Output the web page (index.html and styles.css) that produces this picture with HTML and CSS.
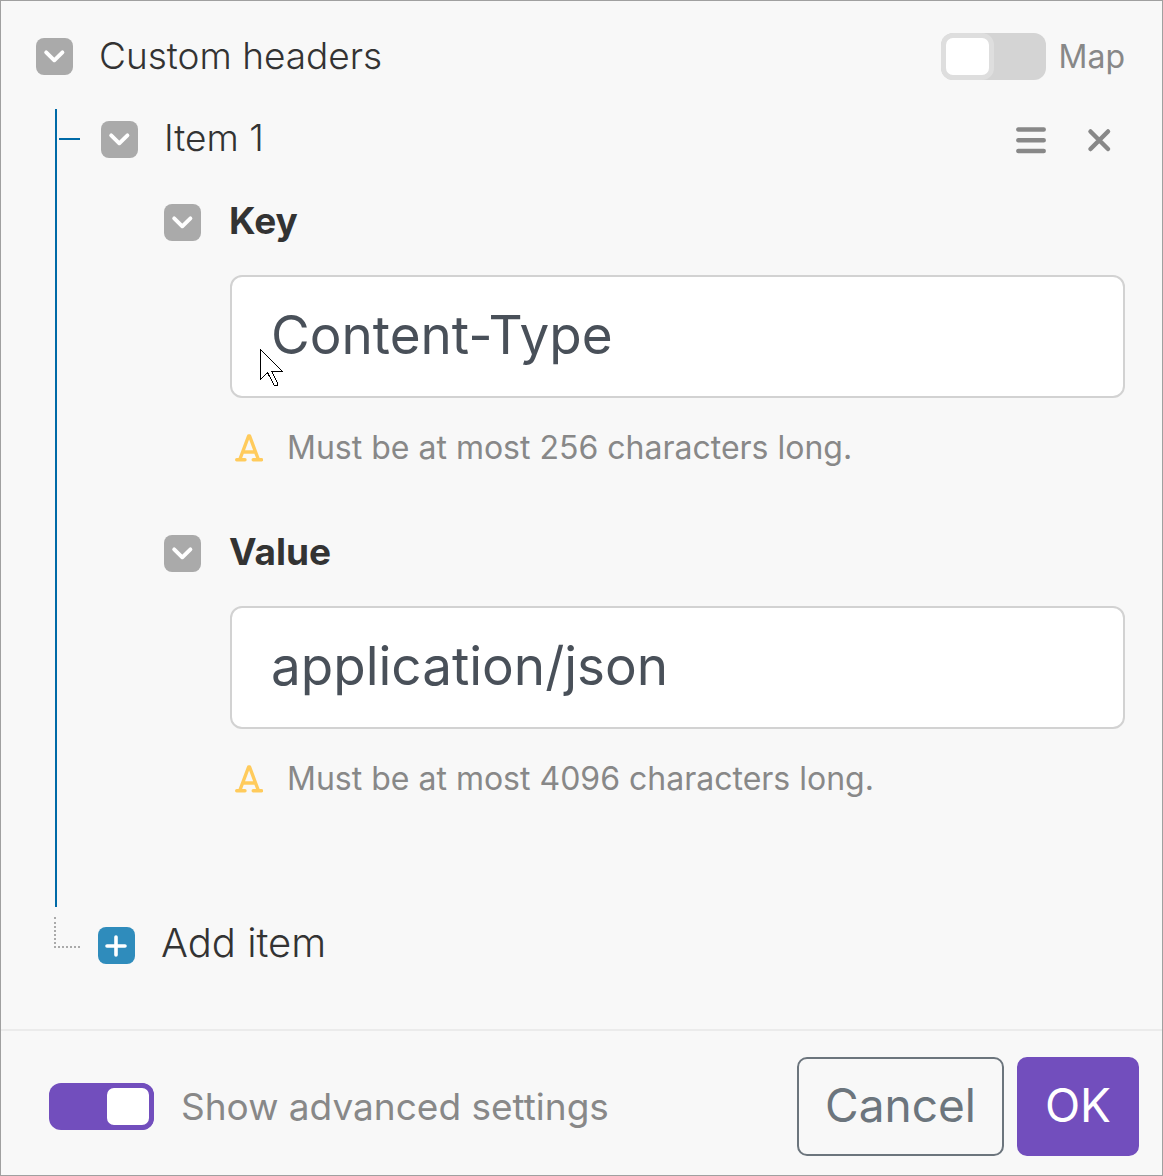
FILE: index.html
```html
<!DOCTYPE html>
<html lang="en">
<head>
  <meta charset="utf-8">
  <meta name="viewport" content="width=device-width, initial-scale=1">
  <title>Custom headers</title>
  <link rel="stylesheet" href="styles.css">
</head>
<body>
  <svg class="symbols" aria-hidden="true">
    <symbol id="chevron" viewBox="0 0 37 37"><path d="M10.2 14.3l8.100 8 8.100-8" fill="none" stroke="#fff" stroke-width="3.900" stroke-linecap="round" stroke-linejoin="round"/></symbol>
    <symbol id="format" viewBox="0 0 28 28"><path d="M5 25L13.600 2h1L23.200 25M8.500 18h11M1.700 25.700h8.300M18.200 25.700h8.300" fill="none" stroke="#ffcb5c" stroke-width="3.400" stroke-linecap="round" stroke-linejoin="round"/></symbol>
  </svg>
  <form class="dialog">
    <main class="content">
      <header class="row">
        <button class="square" type="button" aria-label="Collapse custom headers"><svg><use href="#chevron"/></svg></button>
        <h1 class="title">Custom headers</h1>
        <label class="map"><input class="switch" type="checkbox">Map</label>
      </header>

      <section class="tree">
        <div class="item-row">
          <span class="tick"></span>
          <button class="square" type="button" aria-label="Collapse item 1"><svg><use href="#chevron"/></svg></button>
          <h2 class="title title-item">Item 1</h2>
          <div class="actions">
            <button class="icon-button" type="button" aria-label="Reorder"><svg viewBox="0 0 32 32"><path d="M3.300 6.500h25.400M3.300 17.200h25.400M3.300 28h25.400"/></svg></button>
            <button class="icon-button" type="button" aria-label="Remove"><svg viewBox="0 0 32 32"><path d="M7.500 8.500l17.500 17.500M25 8.500L7.500 26"/></svg></button>
          </div>
        </div>

        <div class="fields">
          <div class="field">
            <button class="square" type="button" aria-label="Collapse key"><svg><use href="#chevron"/></svg></button>
            <label class="label" for="key">Key</label>
            <div class="control">
              <input class="text-box" id="key" type="text" value="Content-Type">
              <svg class="pointer" viewBox="0 0 24 38" aria-hidden="true"><path d="M.5.5v30l7-7 6.5 12.500h3.500l.5-1-6-12.500h10.500z" fill="#fff" stroke="#000" shape-rendering="crispEdges"/></svg>
            </div>
            <p class="hint"><svg class="format"><use href="#format"/></svg>Must be at most 256 characters long.</p>
          </div>
          <div class="field">
            <button class="square" type="button" aria-label="Collapse value"><svg><use href="#chevron"/></svg></button>
            <label class="label" for="value">Value</label>
            <div class="control">
              <input class="text-box" id="value" type="text" value="application/json">
            </div>
            <p class="hint"><svg class="format"><use href="#format"/></svg>Must be at most 4096 characters long.</p>
          </div>
        </div>
      </section>

      <div class="add-row">
        <span class="elbow"></span>
        <button class="add" type="button">
          <span class="square square-add"><svg viewBox="0 0 37 37"><path d="M9 19h18M18 10v18" fill="none" stroke="#fff" stroke-width="3.600" stroke-linecap="round"/></svg></span>
          <span class="add-text">Add item</span>
        </button>
      </div>
    </main>

    <footer class="footer">
      <label class="advanced"><input class="switch" type="checkbox" checked>Show advanced settings</label>
      <div class="buttons">
        <button class="button" type="button">Cancel</button>
        <button class="button button-primary" type="submit">OK</button>
      </div>
    </footer>
  </form>
</body>
</html>
```
FILE: styles.css
```css
*, ::before {
  box-sizing: border-box;
}

body {
  margin: 0;
  background: #f8f8f8;
  color: #333;
  font-family: Inter, "Liberation Sans", sans-serif;
  font-weight: 380;
  font-optical-sizing: none;
}

h1, h2, p {
  margin: 0;
}

button {
  padding: 0;
  border: 0;
  background: none;
  color: inherit;
  font: inherit;
  font-optical-sizing: none;
  cursor: pointer;
}

svg {
  display: block;
}

.symbols {
  position: absolute;
  width: 0;
  height: 0;
}

.dialog {
  display: flex;
  flex-direction: column;
  min-height: 100vh;
  border: 1px solid #a0a0a0;
}

.content {
  flex: 1;
  padding: 32px 37px 40px 35px;
}

.row {
  display: flex;
  align-items: center;
  gap: 26px;
  height: 47px;
}

.square {
  flex: none;
  width: 37px;
  height: 37px;
  border-radius: 8px;
  background: #aaa;
}

.square svg {
  width: 37px;
  height: 37px;
}

.square-add {
  background: #2f8cbc;
}

.title {
  padding-bottom: 2px;
  font-size: 37px;
  font-weight: 360;
  line-height: 46px;
}

.title-item {
  margin-left: 26px;
}

.map {
  display: flex;
  align-items: center;
  gap: 13px;
  margin-left: auto;
  color: #888;
  font-size: 32px;
}

.switch {
  appearance: none;
  flex: none;
  width: 105px;
  height: 47px;
  margin: 0;
  border-radius: 12px;
  background: #d4d4d4;
  overflow: hidden;
}

.switch::before {
  content: "";
  display: block;
  width: 53px;
  height: 47px;
  border: 5px solid #dedede;
  border-radius: 12px;
  background: #fff;
}

.switch:checked {
  background: #724ebd;
}

.switch:checked::before {
  width: 52px;
  margin-left: auto;
  border-color: #724ebd;
}

.tree {
  margin: 29px 0 0 19px;
  padding-bottom: 104px;
  border-left: 2px solid #006aa7;
}

.item-row {
  display: flex;
  align-items: center;
  height: 60px;
}

.tick {
  width: 21px;
  height: 2px;
  margin: 0 21px 0 2px;
  background: #006aa7;
}

.actions {
  display: flex;
  gap: 36px;
  margin: 0 10px 0 auto;
}

.icon-button svg {
  width: 32px;
  height: 32px;
  fill: none;
  stroke: #888;
  stroke-width: 4.5;
  stroke-linecap: round;
}

.fields {
  display: grid;
  gap: 57px;
  margin: 29px 0 0 107px;
}

.field {
  display: grid;
  grid-template-columns: 37px 1fr;
  column-gap: 28px;
  align-items: center;
}

.label {
  padding-bottom: 2px;
  font-size: 37px;
  font-weight: 650;
  line-height: 46px;
}

.control {
  position: relative;
  grid-column: 2;
  margin: 29px 0 0 1px;
}

.text-box {
  display: block;
  width: 100%;
  height: 123px;
  padding: 0 40px 4px 39px;
  border: 2px solid #d2d2d2;
  border-radius: 12px;
  background: #fff;
  color: #495059;
  font: 380 53px Inter, "Liberation Sans", sans-serif;
}

.pointer {
  position: absolute;
  top: 74px;
  left: 30px;
  width: 24px;
  height: 38px;
}

.hint {
  grid-column: 2;
  display: flex;
  align-items: center;
  gap: 24px;
  margin-top: 26px;
  padding-left: 6px;
  color: #888;
  font-size: 32px;
  line-height: 48px;
}

.format {
  flex: none;
  width: 28px;
  height: 28px;
}

.add-row {
  display: flex;
  margin: 10px 0 0 18px;
}

.elbow {
  width: 26px;
  height: 31px;
  border: dotted #aaa;
  border-width: 0 0 2px 2px;
}

.add {
  display: flex;
  align-items: center;
  gap: 26px;
  margin-left: 18px;
  font-size: 40px;
  font-weight: 350;
  line-height: 52px;
}

.add-text {
  padding-bottom: 4px;
}

.footer {
  display: flex;
  align-items: center;
  justify-content: space-between;
  padding: 26px 23px 19px 48px;
  border-top: 2px solid #ebebeb;
}

.advanced {
  display: flex;
  align-items: center;
  gap: 27px;
  color: #888;
  font-size: 37px;
}

.buttons {
  display: flex;
  gap: 13px;
}

.button {
  height: 99px;
  padding: 0 26px 4px;
  border: 2px solid #6c757d;
  border-radius: 10px;
  color: #6c757d;
  font-size: 46px;
}

.button-primary {
  border-color: #724ebd;
  background: #724ebd;
  color: #fff;
}
```
